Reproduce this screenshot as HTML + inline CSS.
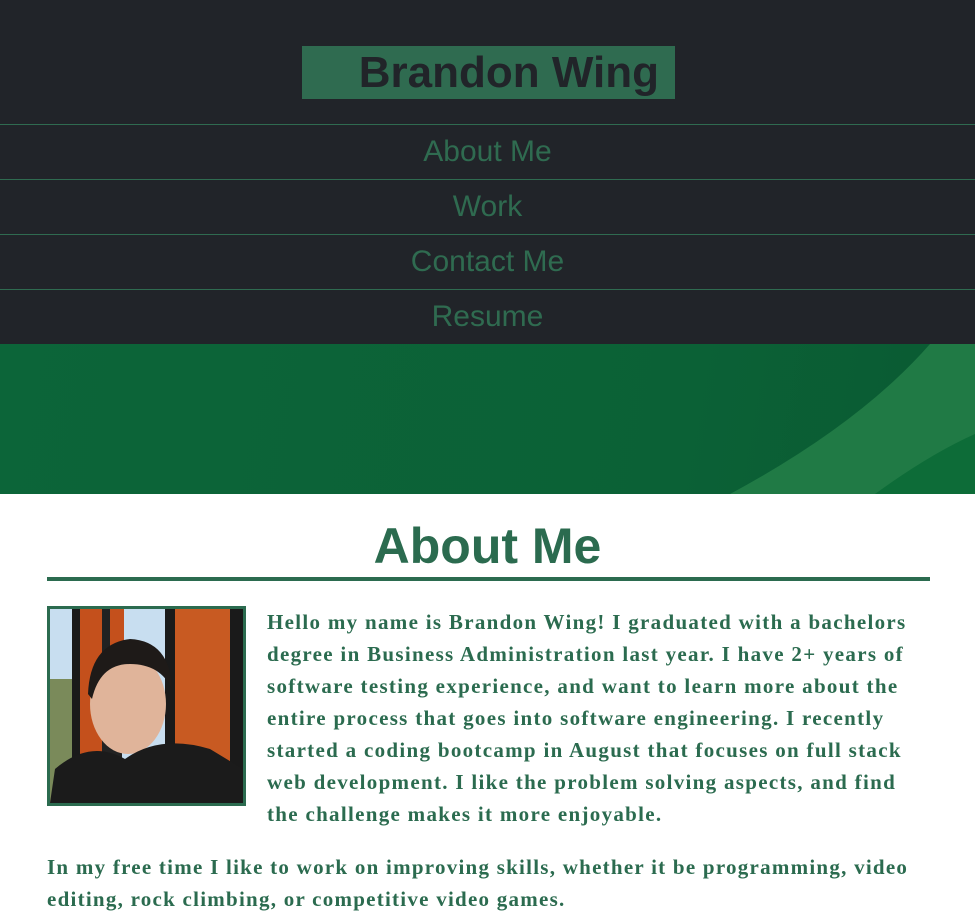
<!DOCTYPE html>
<html><head><meta charset="utf-8"><style>
*{margin:0;padding:0;box-sizing:border-box}
body{width:975px;height:907px;overflow:hidden;background:#fff;font-family:"Liberation Sans",Arial,sans-serif}
header{background:#212429;height:344px;position:relative}
.title{position:absolute;left:302px;top:46px;width:373px;height:53px;background:#2f6b50;color:#212429;font-weight:bold;font-size:44px;line-height:53px;text-align:right;padding-right:16px;white-space:nowrap;overflow:hidden}
nav{position:absolute;top:124px;left:0;width:975px}
nav div{height:55px;border-top:1px solid #2f6b50;color:#2f6b50;font-size:30px;text-align:center;line-height:54px}
.hero{height:150px;position:relative;overflow:hidden;background:linear-gradient(100deg,#0c6539 0%,#0b6136 70%,#0a5a32 100%)}
h2{text-align:center;color:#2b6b4f;font-size:50px;line-height:52px;margin-top:26px;height:57px}
.rule{position:absolute;left:47px;top:577px;width:883px;height:4px;background:#2b6b4f}
.photo{position:absolute;left:47px;top:606px;width:199px;height:200px;border:3px solid #2b6b4f;overflow:hidden;background:#b9d6ee}
.p1,.p2{position:absolute;font-family:"Liberation Serif",Georgia,serif;font-weight:bold;color:#2b6b4f;font-size:21px;line-height:32px;white-space:nowrap}
.p1{left:267px;top:606px;letter-spacing:1.3px}
.p2{left:47px;top:851px;letter-spacing:1.25px}
</style></head><body>
<header>
<div class="title">Brandon Wing</div>
<nav><div>About Me</div><div>Work</div><div>Contact Me</div><div>Resume</div></nav>
</header>
<div class="hero">
<svg width="975" height="150" style="position:absolute;left:0;top:0">
<path d="M730 150 Q860 80 930 0 L975 0 L975 150 Z" fill="#207a45"/>
<path d="M875 150 Q930 110 975 90 L975 150 Z" fill="#0d6c38"/>
</svg>
</div>
<h2>About Me</h2>
<div class="rule"></div>
<div class="photo">
<svg width="193" height="194" viewBox="0 0 193 194">
<rect width="193" height="194" fill="#c8def0"/>
<rect x="0" y="70" width="40" height="124" fill="#7a8a5a"/>
<rect x="22" y="0" width="8" height="194" fill="#1a1a1a"/>
<rect x="30" y="0" width="22" height="194" fill="#c4501c"/>
<rect x="52" y="0" width="20" height="194" fill="#222"/>
<rect x="60" y="0" width="14" height="40" fill="#c4501c"/>
<rect x="115" y="0" width="10" height="194" fill="#1a1a1a"/>
<rect x="125" y="0" width="55" height="194" fill="#c85a22"/>
<rect x="180" y="0" width="13" height="194" fill="#1a1a1a"/>
<ellipse cx="78" cy="95" rx="38" ry="50" fill="#e0b49a"/>
<path d="M38 85 Q40 35 80 30 Q120 32 122 80 Q110 55 80 55 Q50 55 42 90Z" fill="#1e1a18"/>
<path d="M0 194 L5 160 Q40 130 75 150 Q110 125 160 140 L193 160 L193 194Z" fill="#1b1b1b"/>
</svg>
</div>
<div class="p1">Hello my name is Brandon Wing! I graduated with a bachelors<br>degree in Business Administration last year. I have 2+ years of<br>software testing experience, and want to learn more about the<br>entire process that goes into software engineering. I recently<br>started a coding bootcamp in August that focuses on full stack<br>web development. I like the problem solving aspects, and find<br>the challenge makes it more enjoyable.</div>
<div class="p2">In my free time I like to work on improving skills, whether it be programming, video<br>editing, rock climbing, or competitive video games.</div>
</body></html>
